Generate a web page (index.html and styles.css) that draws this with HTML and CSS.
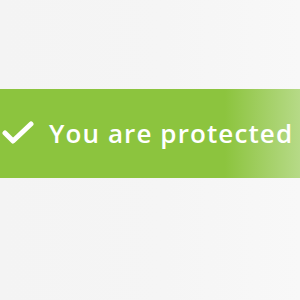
FILE: index.html
```html
<!DOCTYPE html>
<html lang="en">
  <head>
    <meta charset="UTF-8" />
    <meta name="viewport" content="width=device-width, initial-scale=1.0" />
    <title>Protected</title>
    <link rel="stylesheet" href="styles.css">
  </head>
  <body>
    <div class="page">
      <div class="banner">
        <svg class="check" width="32" height="24" viewBox="0 0 32 24">
          <path d="M3 12 L11 20 L29 3" fill="none" stroke="#fff" stroke-width="5" stroke-linecap="round" stroke-linejoin="round" />
        </svg>
        <span class="label">You are protected</span>
      </div>
    </div>
  </body>
</html>
```

FILE: styles.css
```css
body {
  margin: 0;
  background: linear-gradient(to right, #f4f4f4 0%, #f5f5f5 55%, #f8f8f8 100%);
  font-family: "Open Sans", "Liberation Sans", sans-serif;
}

.page {
  height: 300px;
  padding-top: 89px;
  box-sizing: border-box;
}

.banner {
  height: 89px;
  display: flex;
  align-items: center;
  gap: 15px;
  padding-left: 2px;
  background: linear-gradient(to right, #8cc43e 0%, #8cc43e 75%, #a2cf64 88%, #b6da87 100%);
}

.check {
  margin-top: -2px;
}

.label {
  color: #fff;
  font-size: 26px;
  font-weight: 600;
  letter-spacing: 1.1px;
  margin-top: -1px;
  white-space: nowrap;
}
```
